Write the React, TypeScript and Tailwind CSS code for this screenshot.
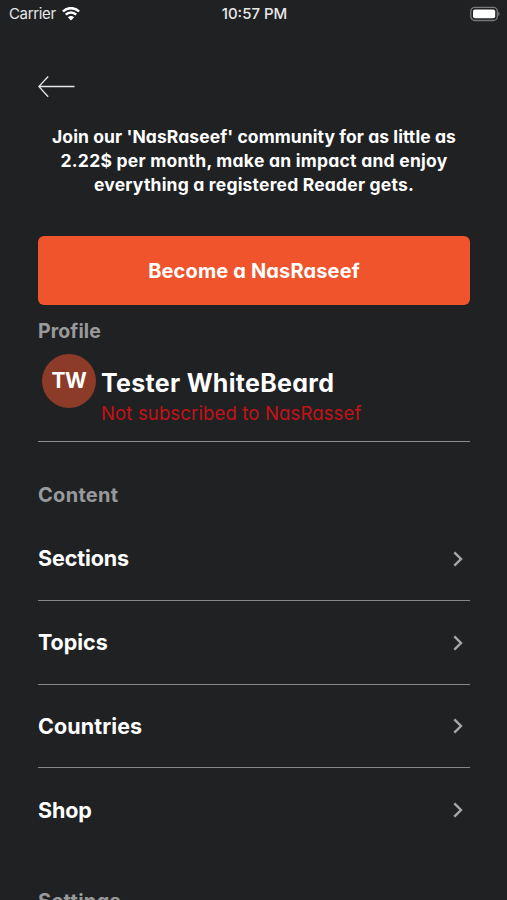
import React from "react";

const rows = [
  { label: "Sections", style: "tracking-[-0.1px]" },
  { label: "Topics", style: "tracking-[-0.05px]" },
  { label: "Countries", style: "tracking-[0.1px]" },
  { label: "Shop", style: "tracking-[-0.1px]" },
];

function StatusBar() {
  return (
    <header className="grid h-7 grid-cols-3 items-center pl-[9px] pr-[7px] text-[15px] leading-7 text-[#e8e8e8] [font-feature-settings:normal]">
      <div className="flex items-center gap-[6px]">
        <span className="w-[47px] tracking-[-0.35px]">Carrier</span>
        <svg width="18" height="14" viewBox="0 0 18 14" fill="none" stroke="#fff" strokeWidth="2.5">
          <path d="M0.9 4.5C5.3 0 12.7 0 17.1 4.5" />
          <path d="M3.8 7.7C6.7 4.8 11.3 4.8 14.2 7.7" />
          <path d="M5.9 10.2C7.6 8.5 10.4 8.5 12.1 10.2L9 13.4Z" fill="#fff" stroke="none" />
        </svg>
      </div>
      <time className="text-center font-medium">10:57 PM</time>
      <svg className="-mt-px justify-self-end" width="30" height="16" viewBox="0 0 30 16">
        <rect x="0.8" y="1.3" width="26.5" height="13.2" rx="4" fill="none" stroke="#77797a" strokeWidth="1.3" />
        <rect x="3" y="3.5" width="22.2" height="8.8" rx="2" fill="#fff" />
        <path d="M28.3 5.6Q31 7.9 28.3 10.2Z" fill="#77797a" />
      </svg>
    </header>
  );
}

export default function App() {
  return (
    <div className="h-[900px] overflow-hidden bg-[#202123] font-['Inter',sans-serif] text-white [font-feature-settings:'cv11'] [font-optical-sizing:none]">
      <StatusBar />
      <main className="pl-[38px] pr-[37px]">
        <button className="mt-[47px] block h-6" aria-label="Back">
          <svg width="37" height="24" viewBox="0 0 37 24" fill="none" stroke="#e6e6e6" strokeWidth="1.3">
            <path d="M0.8 11.5H36.5M10.2 1.5L0.8 11.5L10.2 21.8" />
          </svg>
        </button>

        <p className="mt-[26px] whitespace-nowrap text-center text-[17.5px] font-bold leading-6">
          <span className="block tracking-[0.08px]">Join our 'NasRaseef' community for as little as</span>
          <span className="block tracking-[0.25px]">2.22$ per month, make an impact and enjoy</span>
          <span className="block tracking-[0.2px]">everything a registered Reader gets.</span>
        </p>

        <button className="mt-[39px] block h-[69px] w-full rounded-md bg-[#ef542c] text-[20px] font-bold tracking-[0.15px]">
          Become a NasRaseef
        </button>

        <h2 className="mt-3 text-[19.5px] font-bold leading-7 tracking-[0.1px] text-[#98999b]">Profile</h2>
        <section className="flex h-[97px] gap-[5px] border-b border-[#8c8d8e] pl-1">
          <div className="mt-[9px] flex h-[54px] w-[54px] items-center justify-center rounded-full bg-[#8b3b27] text-[21px] font-bold tracking-[-0.4px]">TW</div>
          <div className="whitespace-nowrap pt-[22px]">
            <div className="text-[25px] font-bold leading-8 tracking-[0.3px]">Tester WhiteBeard</div>
            <div className="text-[18.5px] leading-7 tracking-[0.15px] text-[#c51216]">Not subscribed to NasRassef</div>
          </div>
        </section>

        <h2 className="mt-[39px] text-[20px] font-bold leading-7 tracking-[0.3px] text-[#98999b]">Content</h2>
        <nav className="mt-2">
          {rows.map((row, i) => (
            <a key={row.label} className={`flex h-[83.75px] items-center justify-between pr-[7px] ${i < 3 ? "border-b border-[#858687]" : "pb-px"}`}>
              <span className={`text-[21.5px] font-bold ${row.style}`}>{row.label}</span>
              <svg className="mt-px" width="10" height="16" viewBox="0 0 10 16" fill="none" stroke="#a6a7a8" strokeWidth="2.4">
                <path d="M1.3 1.3L8 8L1.3 14.7" />
              </svg>
            </a>
          ))}
        </nav>
        <h2 className="mt-[35px] text-[20px] font-bold leading-7 tracking-[0.3px] text-[#98999b]">Settings</h2>
      </main>
    </div>
  );
}
